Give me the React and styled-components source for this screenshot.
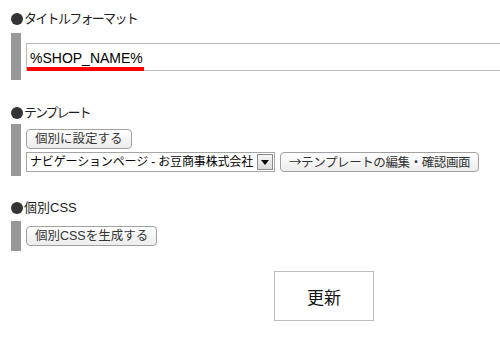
import React from 'react';
import styled, { createGlobalStyle } from 'styled-components';

const Global = createGlobalStyle`
  html, body { margin: 0; padding: 0; background: #fff; }
  body {
    font-family: "Liberation Sans", "Noto Sans CJK JP", sans-serif;
    color: #222;
    overflow: hidden;
  }
`;

const Page = styled.div`
  width: 500px;
  height: 341px;
  overflow: hidden;
  box-sizing: border-box;
  padding: 12px 0 0 11px;
`;

const Section = styled.section`
  margin-top: ${(p) => p.$top || 0}px;
`;

const Heading = styled.h3`
  margin: 0 0 ${(p) => p.$gap}px;
  display: flex;
  align-items: center;
  gap: 1px;
  font-size: 13px;
  font-weight: normal;
  line-height: 14px;
  color: #1e1e1e;
`;

const HeadingText = styled.span`
  letter-spacing: ${(p) => p.$ls || 0}px;
`;

const Bullet = styled.span`
  flex: none;
  width: 12px;
  height: 12px;
  border-radius: 50%;
  background: #333;
`;

const Bar = styled.div`
  border-left: 10px solid #999;
  padding: ${(p) => p.$pad};
  padding-left: 5px;
  display: flex;
  flex-direction: column;
  align-items: flex-start;
  gap: ${(p) => p.$gap || 0}px;
`;

const InputWrap = styled.div`
  position: relative;
`;

const TextInput = styled.input`
  display: block;
  width: 490px;
  height: 28px;
  box-sizing: border-box;
  border: 1px solid #bbb;
  padding: 6px 3px 4px;
  font-family: "Liberation Sans", sans-serif;
  font-size: 14px;
  line-height: 16px;
  color: #000;
  outline: none;
`;

const Underline = styled.span`
  position: absolute;
  left: 1px;
  top: 24px;
  width: 117px;
  height: 4px;
  background: #f00;
`;

const Row = styled.div`
  display: flex;
  align-items: center;
  gap: 5px;
`;

const Button = styled.button`
  height: 20px;
  box-sizing: border-box;
  padding: 0 8px;
  border: 1px solid #a0a0a0;
  border-radius: 4px;
  background: linear-gradient(#ffffff, #ececec);
  font-family: ${(p) =>
    p.$cjk
      ? '"Noto Sans CJK JP", sans-serif'
      : '"Liberation Sans", "Noto Sans CJK JP", sans-serif'};
  font-size: 12.5px;
  letter-spacing: ${(p) => (p.$cjk ? -0.4 : 0)}px;
  line-height: 18px;
  color: #333;
  white-space: nowrap;
  cursor: pointer;
`;

const SelectBox = styled.div`
  display: inline-flex;
  align-items: center;
  height: 20px;
  box-sizing: border-box;
  border: 1px solid #a5a5a5;
  background: #fff;
  padding: 0 1px 0 3px;
`;

const NativeSelect = styled.select`
  appearance: none;
  border: none;
  outline: none;
  background: transparent;
  margin: 0;
  padding: 0;
  height: 16px;
  font-family: "Liberation Sans", "Noto Sans CJK JP", sans-serif;
  font-size: 12px;
  letter-spacing: -0.15px;
  color: #000;
`;

const ArrowBox = styled.span`
  width: 16px;
  height: 16px;
  box-sizing: border-box;
  margin-left: 3px;
  border: 1px solid #8a8a8a;
  background: linear-gradient(#f6f6f6, #dadada);
  display: flex;
  align-items: center;
  justify-content: center;
`;

const Footer = styled.div`
  margin: 20px 0 0 263px;
`;

const UpdateButton = styled.button`
  width: 100px;
  height: 50px;
  box-sizing: border-box;
  border: 1px solid #bbb;
  background: #fff;
  font-family: "Noto Sans CJK JP", sans-serif;
  font-size: 17px;
  color: #111;
  cursor: pointer;
`;

export default function App() {
  return (
    <>
      <Global />
      <Page>
        <Section>
          <Heading $gap={7}>
            <Bullet />
            <HeadingText $ls={-1.7}>タイトルフォーマット</HeadingText>
          </Heading>
          <Bar $pad="10px 0 9px">
            <InputWrap>
              <TextInput defaultValue="%SHOP_NAME%" />
              <Underline />
            </InputWrap>
          </Bar>
        </Section>

        <Section $top={26}>
          <Heading $gap={4}>
            <Bullet />
            <HeadingText $ls={-2}>テンプレート</HeadingText>
          </Heading>
          <Bar $pad="5px 0 4px" $gap={3}>
            <Button>個別に設定する</Button>
            <Row>
              <SelectBox>
                <NativeSelect defaultValue="nav">
                  <option value="nav">ナビゲーションページ - お豆商事株式会社</option>
                </NativeSelect>
                <ArrowBox>
                  <svg width="8" height="5" viewBox="0 0 8 5">
                    <path d="M0 0H8L4 5Z" fill="#000" />
                  </svg>
                </ArrowBox>
              </SelectBox>
              <Button $cjk>→テンプレートの編集・確認画面</Button>
            </Row>
          </Bar>
        </Section>

        <Section $top={25}>
          <Heading $gap={6}>
            <Bullet />
            <HeadingText>個別CSS</HeadingText>
          </Heading>
          <Bar $pad="5px 0 5px">
            <Button>個別CSSを生成する</Button>
          </Bar>
        </Section>

        <Footer>
          <UpdateButton>更新</UpdateButton>
        </Footer>
      </Page>
    </>
  );
}
